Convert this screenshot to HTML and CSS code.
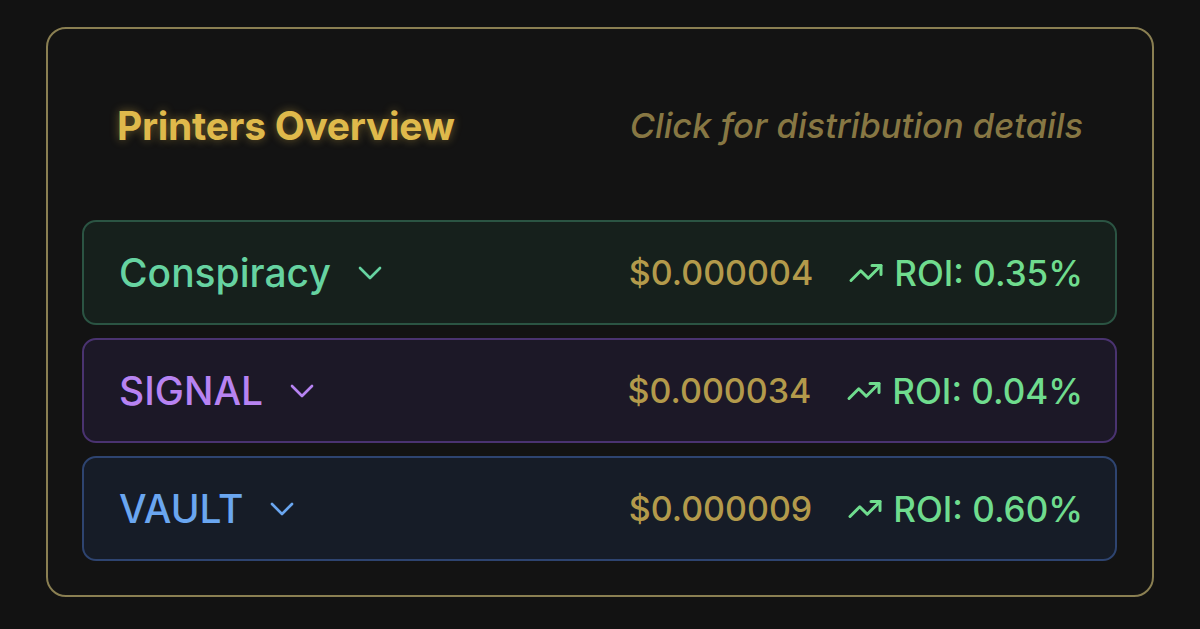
FILE: index.html
```html
<!DOCTYPE html>
<html lang="en">
<head>
<meta charset="utf-8">
<title>Printers Overview</title>
<link rel="stylesheet" href="styles.css">
</head>
<body>
<div class="card">
  <div class="header">
    <h2 class="title">Printers Overview</h2>
    <span class="hint">Click for distribution details</span>
  </div>
  <div class="rows">
    <div class="row row-green">
      <div class="left">
        <span class="name">Conspiracy</span>
        <svg class="chev" viewBox="0 0 24 24" fill="none" stroke="currentColor" stroke-width="2" stroke-linecap="round" stroke-linejoin="round"><path d="m6 9 6 6 6-6"/></svg>
      </div>
      <div class="right">
        <span class="price">$0.000004</span>
        <span class="roi">
          <svg class="trend" viewBox="0 0 24 24" fill="none" stroke="currentColor" stroke-width="2" stroke-linecap="round" stroke-linejoin="round"><polyline points="22 7 13.5 15.5 8.5 10.5 2 17"/><polyline points="16 7 22 7 22 13"/></svg>
          ROI: 0.35%
        </span>
      </div>
    </div>
    <div class="row row-purple">
      <div class="left">
        <span class="name">SIGNAL</span>
        <svg class="chev" viewBox="0 0 24 24" fill="none" stroke="currentColor" stroke-width="2" stroke-linecap="round" stroke-linejoin="round"><path d="m6 9 6 6 6-6"/></svg>
      </div>
      <div class="right">
        <span class="price">$0.000034</span>
        <span class="roi">
          <svg class="trend" viewBox="0 0 24 24" fill="none" stroke="currentColor" stroke-width="2" stroke-linecap="round" stroke-linejoin="round"><polyline points="22 7 13.5 15.5 8.5 10.5 2 17"/><polyline points="16 7 22 7 22 13"/></svg>
          ROI: 0.04%
        </span>
      </div>
    </div>
    <div class="row row-blue">
      <div class="left">
        <span class="name">VAULT</span>
        <svg class="chev" viewBox="0 0 24 24" fill="none" stroke="currentColor" stroke-width="2" stroke-linecap="round" stroke-linejoin="round"><path d="m6 9 6 6 6-6"/></svg>
      </div>
      <div class="right">
        <span class="price">$0.000009</span>
        <span class="roi">
          <svg class="trend" viewBox="0 0 24 24" fill="none" stroke="currentColor" stroke-width="2" stroke-linecap="round" stroke-linejoin="round"><polyline points="22 7 13.5 15.5 8.5 10.5 2 17"/><polyline points="16 7 22 7 22 13"/></svg>
          ROI: 0.60%
        </span>
      </div>
    </div>
  </div>
</div>
</body>
</html>
```
FILE: styles.css
```css
* { box-sizing: border-box; }
html, body {
  margin: 0;
  background: #121212;
  font-family: Inter, "Noto Sans", "Liberation Sans", sans-serif;
}
body {
  padding: 27px 46px 32px;
}
.card {
  border: 2px solid #8a7f52;
  border-radius: 20px;
  background: #131313;
  padding: 34px 35px 34px 34px;
  height: 570px;
}
.header {
  display: flex;
  align-items: center;
  justify-content: space-between;
  height: 124px;
  padding: 0 34px 0 35px;
  margin-bottom: 33px;
}
.title {
  margin: 0;
  font-size: 39px;
  font-weight: 700;
  color: #dfb94b;
  letter-spacing: -0.3px;
  text-shadow: 0 0 10px rgba(223, 185, 75, 0.45);
}
.hint {
  font-size: 34.5px;
  font-style: italic;
  font-weight: 500;
  color: #877743;
}
.rows {
  display: flex;
  flex-direction: column;
  gap: 13px;
}
.row {
  height: 105px;
  border: 2px solid;
  border-radius: 14px;
  display: flex;
  align-items: center;
  justify-content: space-between;
  padding: 0 32px 0 35px;
}
.row-green { background: #16201c; border-color: #2b5443; }
.row-purple { background: #1c1827; border-color: #4a3370; }
.row-blue { background: #161c27; border-color: #2e4470; }
.left {
  display: flex;
  align-items: center;
}
.name {
  font-size: 39px;
  font-weight: 500;
}
.row-green .name, .row-green .chev { color: #66d3a1; }
.row-purple .name, .row-purple .chev { color: #b783f2; }
.row-blue .name, .row-blue .chev { color: #6aa6f0; }
.chev {
  width: 40px;
  height: 40px;
  margin-left: 19px;
  stroke-width: 1.6;
}
.right {
  display: flex;
  align-items: center;
}
.price {
  font-size: 34px;
  font-weight: 500;
  color: #b39a4b;
}
.roi {
  display: flex;
  align-items: center;
  margin-left: 35px;
  font-size: 35px;
  font-weight: 500;
  color: #6fdc8e;
}
.trend {
  width: 36px;
  height: 36px;
  margin-right: 10px;
  stroke-width: 2;
}
```
